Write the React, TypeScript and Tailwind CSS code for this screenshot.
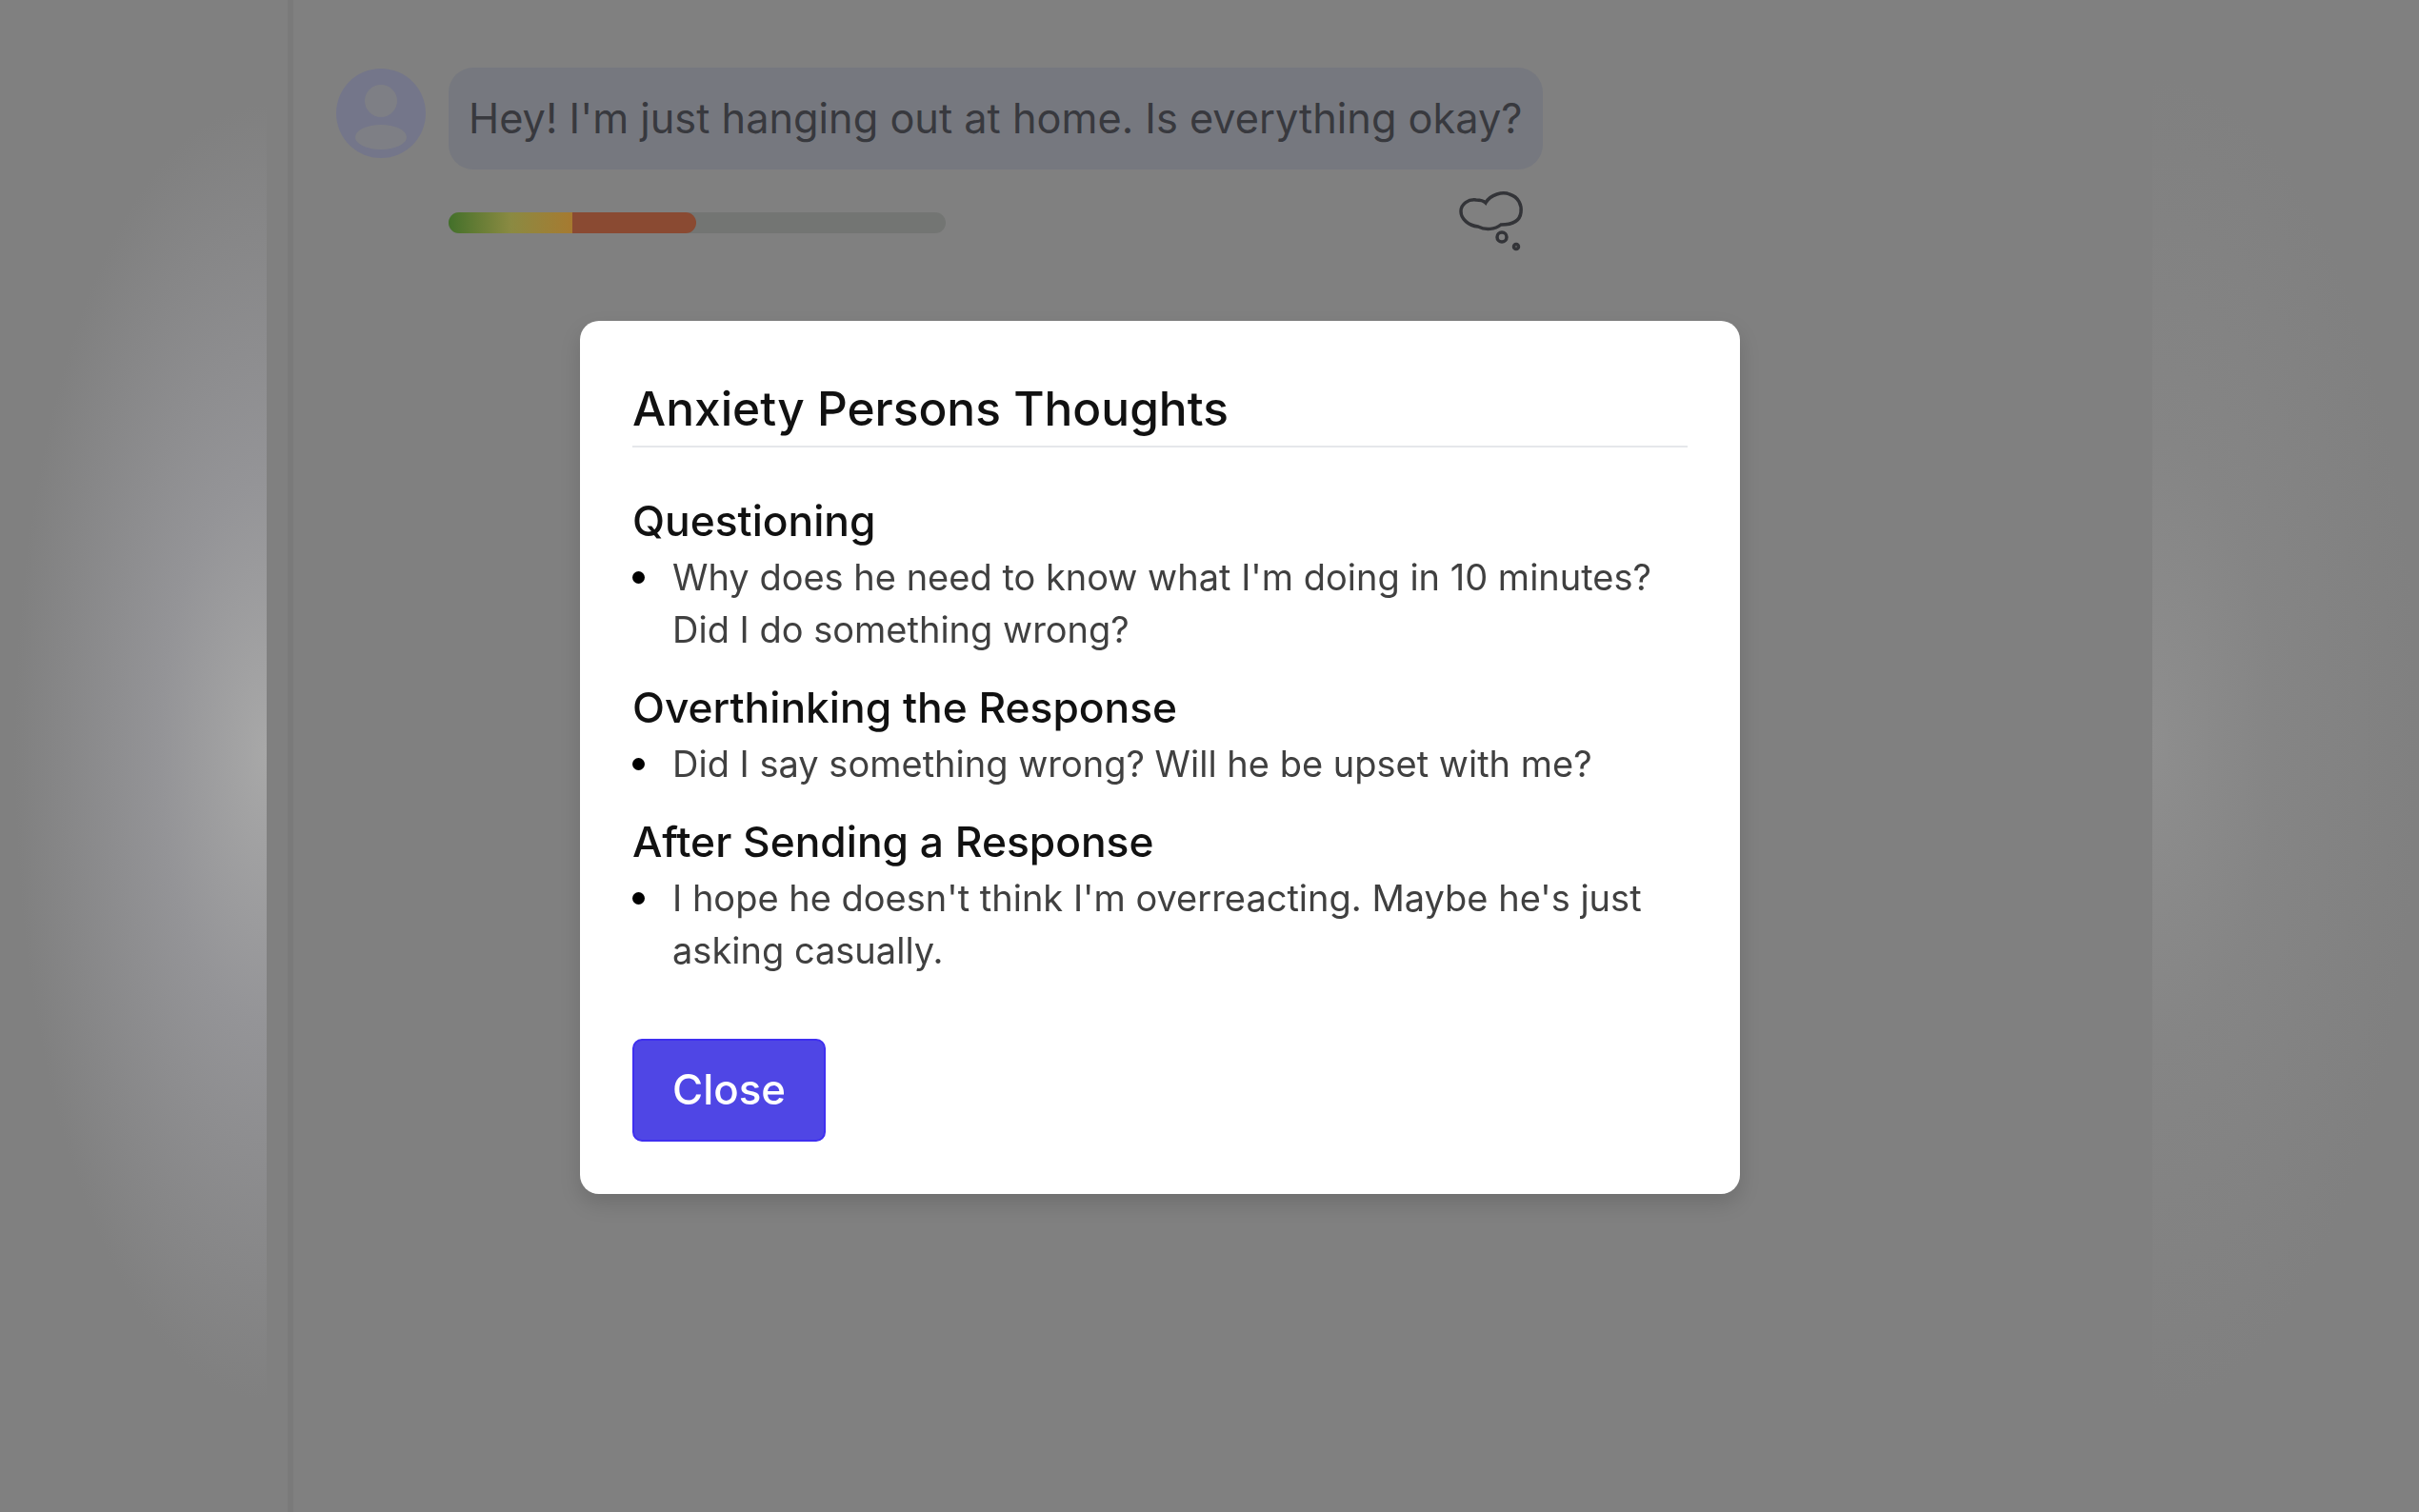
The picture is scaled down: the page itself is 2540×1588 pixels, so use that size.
const sections = [
  {
    title: "Questioning",
    items: ["Why does he need to know what I'm doing in 10 minutes? Did I do something wrong?"],
  },
  {
    title: "Overthinking the Response",
    items: ["Did I say something wrong? Will he be upset with me?"],
  },
  {
    title: "After Sending a Response",
    items: ["I hope he doesn't think I'm overreacting. Maybe he's just asking casually."],
  },
];

function Avatar() {
  return (
    <svg viewBox="0 0 94 96" className="w-[94px] h-[96px] shrink-0">
      <circle cx="47" cy="48" r="47" fill="#74768a" />
      <circle cx="47" cy="35" r="17" fill="#7e7f85" />
      <ellipse cx="47" cy="73" rx="27" ry="13" fill="#7e7f85" />
    </svg>
  );
}

function ThoughtIcon() {
  return (
    <svg viewBox="0 0 120 100" className="w-[120px] h-[100px]" fill="none" stroke="#333438" strokeWidth="3.5">
      <path d="M60 33C65 24 78 21 85 24C95 27 98 36 97 43C96 52 88 56 76 56C70 61 60 62 52 58C42 57 34 50 34 42C34 34 42 29 50 30C54 30 58 31 60 33Z" />
      <circle cx="77" cy="69" r="5" />
      <circle cx="92" cy="79" r="2.5" />
    </svg>
  );
}

export default function App() {
  return (
    <div className="h-screen overflow-hidden bg-[#808080]">
      <div className="h-full flex font-[Inter,sans-serif] blur-[0.6px]">
        <div className="w-[280px] shrink-0 bg-[radial-gradient(ellipse_265px_680px_at_100%_790px,#a8a8a8_0%,#949497_42%,#808080_100%)]" />
        <div className="w-[28px] shrink-0 border-r-[6px] border-[#7a7a7a]" />

        <main className="flex-1 pt-[71px] pl-[45px]">
          <div className="flex gap-[24px] items-start">
            <Avatar />
            <div className="w-[1149px]">
              <div className="h-[107px] flex items-center px-[21px] rounded-[26px] bg-[#76787f] text-[#38393e] text-[43.3px] whitespace-nowrap">
                Hey! I'm just hanging out at home. Is everything okay?
              </div>
              <div className="flex justify-between">
                <div className="mt-[45px] w-[522px] h-[22px] rounded-full bg-[#737573] overflow-hidden flex">
                  <div className="w-[130px] bg-gradient-to-r from-[#42702a] via-[#8a8a42] to-[#a67a30]" />
                  <div className="w-[130px] bg-[#8a4a32] rounded-r-full" />
                </div>
                <div className="mt-[2px]">
                  <ThoughtIcon />
                </div>
              </div>
            </div>
          </div>
        </main>

        <div className="w-[280px] shrink-0 bg-[radial-gradient(ellipse_280px_700px_at_0%_780px,#8e8e8e_0%,#858585_45%,#808080_100%)]" />

        <div className="fixed inset-0 pl-[609px] pt-[337px]">
          <div className="w-[1218px] h-[917px] bg-white rounded-[20px] p-[55px] shadow-[0_10px_22px_rgba(0,0,0,0.14)] text-[#111]">
            <h2 className="mt-[5px] text-[49.6px] leading-[64px] font-medium pb-[7px] border-b-2 border-[#e5e7eb]">
              Anxiety Persons Thoughts
            </h2>
            <div className="mt-[45px] flex flex-col gap-[22px]">
              {sections.map((s) => (
                <section key={s.title}>
                  <h3 className="text-[44.3px] leading-[64px] font-medium">{s.title}</h3>
                  <ul>
                    {s.items.map((t) => (
                      <li key={t} className="flex gap-[29px] text-[38px] leading-[55px] text-[#404040]">
                        <span className="mt-[21px] w-[13px] h-[13px] rounded-full bg-black shrink-0" />
                        <span>{t}</span>
                      </li>
                    ))}
                  </ul>
                </section>
              ))}
            </div>
            <button className="mt-[65px] w-[203px] h-[108px] rounded-[10px] bg-[#4f46e5] border-2 border-[#3f2ff0] text-white text-[43.8px] font-medium">
              Close
            </button>
          </div>
        </div>
      </div>
    </div>
  );
}
